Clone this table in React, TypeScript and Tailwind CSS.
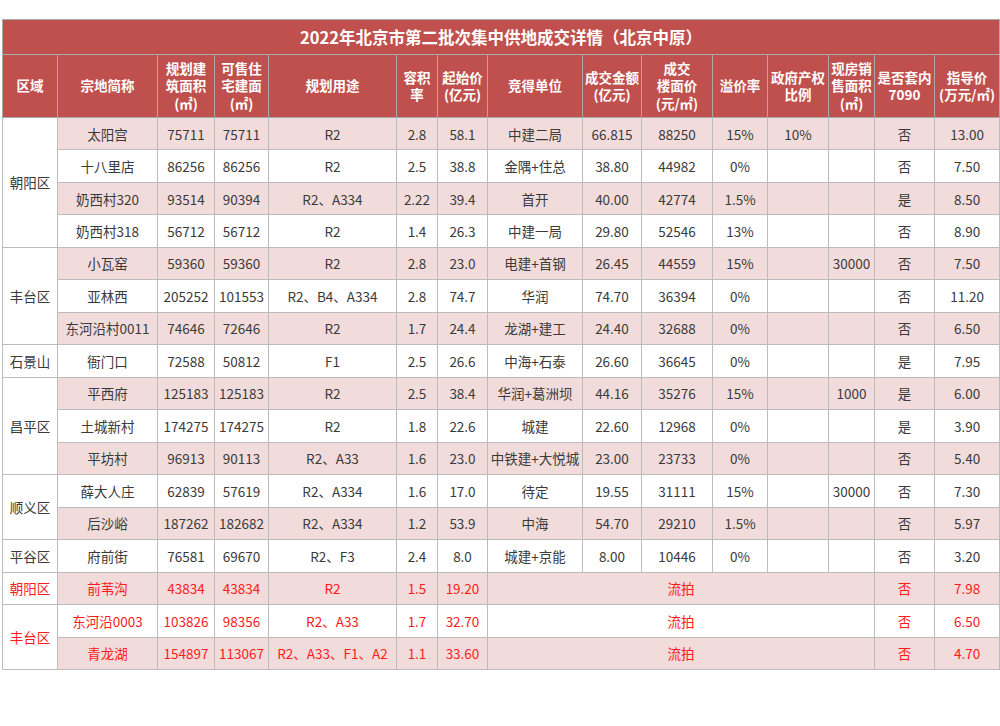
import React from "react";

type Row = {
  region?: { name: string; span: number };
  name: string;
  area: string;
  sale: string;
  use: string;
  far: string;
  start: string;
  winner?: string;
  amount?: string;
  price?: string;
  premium?: string;
  gov?: string;
  spot?: string;
  in7090: string;
  guide: string;
  failed?: boolean;
};

const ROWS: Row[] = [
  { region: { name: "朝阳区", span: 4 }, name: "太阳宫", area: "75711", sale: "75711", use: "R2", far: "2.8", start: "58.1", winner: "中建二局", amount: "66.815", price: "88250", premium: "15%", gov: "10%", in7090: "否", guide: "13.00" },
  { name: "十八里店", area: "86256", sale: "86256", use: "R2", far: "2.5", start: "38.8", winner: "金隅+住总", amount: "38.80", price: "44982", premium: "0%", in7090: "否", guide: "7.50" },
  { name: "奶西村320", area: "93514", sale: "90394", use: "R2、A334", far: "2.22", start: "39.4", winner: "首开", amount: "40.00", price: "42774", premium: "1.5%", in7090: "是", guide: "8.50" },
  { name: "奶西村318", area: "56712", sale: "56712", use: "R2", far: "1.4", start: "26.3", winner: "中建一局", amount: "29.80", price: "52546", premium: "13%", in7090: "否", guide: "8.90" },
  { region: { name: "丰台区", span: 3 }, name: "小瓦窑", area: "59360", sale: "59360", use: "R2", far: "2.8", start: "23.0", winner: "电建+首钢", amount: "26.45", price: "44559", premium: "15%", spot: "30000", in7090: "否", guide: "7.50" },
  { name: "亚林西", area: "205252", sale: "101553", use: "R2、B4、A334", far: "2.8", start: "74.7", winner: "华润", amount: "74.70", price: "36394", premium: "0%", in7090: "否", guide: "11.20" },
  { name: "东河沿村0011", area: "74646", sale: "72646", use: "R2", far: "1.7", start: "24.4", winner: "龙湖+建工", amount: "24.40", price: "32688", premium: "0%", in7090: "否", guide: "6.50" },
  { region: { name: "石景山", span: 1 }, name: "衙门口", area: "72588", sale: "50812", use: "F1", far: "2.5", start: "26.6", winner: "中海+石泰", amount: "26.60", price: "36645", premium: "0%", in7090: "是", guide: "7.95" },
  { region: { name: "昌平区", span: 3 }, name: "平西府", area: "125183", sale: "125183", use: "R2", far: "2.5", start: "38.4", winner: "华润+葛洲坝", amount: "44.16", price: "35276", premium: "15%", spot: "1000", in7090: "是", guide: "6.00" },
  { name: "土城新村", area: "174275", sale: "174275", use: "R2", far: "1.8", start: "22.6", winner: "城建", amount: "22.60", price: "12968", premium: "0%", in7090: "是", guide: "3.90" },
  { name: "平坊村", area: "96913", sale: "90113", use: "R2、A33", far: "1.6", start: "23.0", winner: "中铁建+大悦城", amount: "23.00", price: "23733", premium: "0%", in7090: "否", guide: "5.40" },
  { region: { name: "顺义区", span: 2 }, name: "薛大人庄", area: "62839", sale: "57619", use: "R2、A334", far: "1.6", start: "17.0", winner: "待定", amount: "19.55", price: "31111", premium: "15%", spot: "30000", in7090: "否", guide: "7.30" },
  { name: "后沙峪", area: "187262", sale: "182682", use: "R2、A334", far: "1.2", start: "53.9", winner: "中海", amount: "54.70", price: "29210", premium: "1.5%", in7090: "否", guide: "5.97" },
  { region: { name: "平谷区", span: 1 }, name: "府前街", area: "76581", sale: "69670", use: "R2、F3", far: "2.4", start: "8.0", winner: "城建+京能", amount: "8.00", price: "10446", premium: "0%", in7090: "否", guide: "3.20" },
  { region: { name: "朝阳区", span: 1 }, name: "前苇沟", area: "43834", sale: "43834", use: "R2", far: "1.5", start: "19.20", in7090: "否", guide: "7.98", failed: true },
  { region: { name: "丰台区", span: 2 }, name: "东河沿0003", area: "103826", sale: "98356", use: "R2、A33", far: "1.7", start: "32.70", in7090: "否", guide: "6.50", failed: true },
  { name: "青龙湖", area: "154897", sale: "113067", use: "R2、A33、F1、A2", far: "1.1", start: "33.60", in7090: "否", guide: "4.70", failed: true },
];

const WIDTHS = [55, 100, 57, 54, 128, 41, 50, 95, 59, 71, 55, 61, 46, 60, 65];

const HEADERS: React.ReactNode[] = [
  "区域",
  "宗地简称",
  <>规划建<br />筑面积<br />(㎡)</>,
  <>可售住<br />宅建面<br />(㎡)</>,
  "规划用途",
  <>容积<br />率</>,
  <>起始价<br />(亿元)</>,
  "竞得单位",
  <>成交金额<br />(亿元)</>,
  <>成交<br />楼面价<br />(元/㎡)</>,
  "溢价率",
  <>政府产权<br />比例</>,
  <>现房销<br />售面积<br />(㎡)</>,
  <>是否套内<br />7090</>,
  <>指导价<br />(万元/㎡)</>,
];

const td = "border border-[#bcbcbc] text-center align-middle whitespace-nowrap p-0";

export default function App() {
  return (
    <div className="min-h-[726px] bg-white pt-[19px] pl-[2px] font-['Noto_Sans_CJK_SC','Noto_Sans',sans-serif] text-[#3a3a3a]">
      <table className="table-fixed border-collapse w-[997px] text-[13.5px]">
        <colgroup>
          {WIDTHS.map((w, i) => (
            <col key={i} style={{ width: w }} />
          ))}
        </colgroup>
        <thead>
          <tr className="h-[35px] bg-[#c0504d] text-white">
            <th colSpan={15} className="border border-[#ababab] text-[16.5px] font-bold text-center">
              2022年北京市第二批次集中供地成交详情（北京中原）
            </th>
          </tr>
          <tr className="h-[63px] bg-[#c0504d] text-white">
            {HEADERS.map((h, i) => (
              <th key={i} className="border border-[#a9a9a9] font-bold text-center align-middle leading-[17.5px] p-0 whitespace-nowrap">
                {h}
              </th>
            ))}
          </tr>
        </thead>
        <tbody>
          {ROWS.map((r, i) => {
            const bg = i % 2 === 0 ? "bg-[#f2dcdb]" : "bg-white";
            const tc = r.failed ? "text-[#ff1a1a]" : "";
            return (
              <tr key={i} className={`h-[32.47px] ${tc}`}>
                {r.region && (
                  <td rowSpan={r.region.span} className={`${td} bg-white`}>
                    {r.region.name}
                  </td>
                )}
                <td className={`${td} ${bg}`}>{r.name}</td>
                <td className={`${td} ${bg}`}>{r.area}</td>
                <td className={`${td} ${bg}`}>{r.sale}</td>
                <td className={`${td} ${bg}`}>{r.use}</td>
                <td className={`${td} ${bg}`}>{r.far}</td>
                <td className={`${td} ${bg}`}>{r.start}</td>
                {r.failed ? (
                  <td colSpan={6} className={`${td} ${bg}`}>流拍</td>
                ) : (
                  <>
                    <td className={`${td} ${bg}`}>{r.winner}</td>
                    <td className={`${td} ${bg}`}>{r.amount}</td>
                    <td className={`${td} ${bg}`}>{r.price}</td>
                    <td className={`${td} ${bg}`}>{r.premium}</td>
                    <td className={`${td} ${bg}`}>{r.gov ?? ""}</td>
                    <td className={`${td} ${bg}`}>{r.spot ?? ""}</td>
                  </>
                )}
                <td className={`${td} ${bg}`}>{r.in7090}</td>
                <td className={`${td} ${bg}`}>{r.guide}</td>
              </tr>
            );
          })}
        </tbody>
      </table>
    </div>
  );
}
